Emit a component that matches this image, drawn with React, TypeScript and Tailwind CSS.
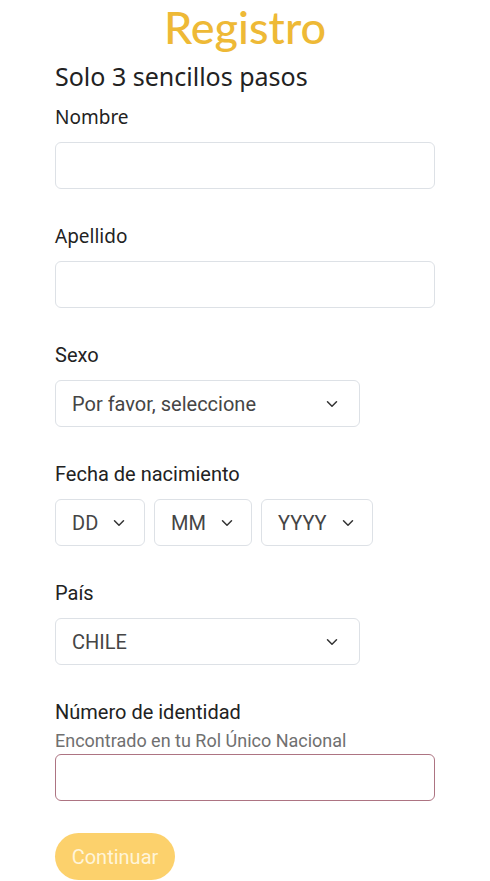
import { ChevronDown } from 'lucide-react';

const roboto = { fontFamily: 'Roboto, "Liberation Sans", sans-serif' };

function Label({ children, font }: { children: React.ReactNode; font?: 'noto' | 'roboto' }) {
  return (
    <label
      className={`block h-[26px] leading-[26px] text-[#222] ${
        font === 'noto' ? "font-['Noto_Sans',sans-serif] text-[19px]" : "font-['Roboto',sans-serif] text-[20px]"
      }`}
    >
      {children}
    </label>
  );
}

function TextInput({ invalid }: { invalid?: boolean }) {
  return (
    <input
      type="text"
      className={`block h-[47px] w-full rounded-md border bg-white px-4 outline-none ${
        invalid ? 'border-[#ad7482]' : 'border-[#dde1e6]'
      }`}
    />
  );
}

function Select({ value, width }: { value: string; width: string }) {
  return (
    <div
      className={`flex h-[47px] ${width} items-center justify-between rounded-md border border-[#dde1e6] bg-white pl-4 pr-[18px] text-[20px] text-[#454545]`}
      style={roboto}
    >
      <span>{value}</span>
      <ChevronDown className="h-[18px] w-[18px] text-[#333]" strokeWidth={2} />
    </div>
  );
}

function DateSelect({ value, width }: { value: string; width: string }) {
  return (
    <div
      className={`flex h-[47px] ${width} items-center gap-[12px] rounded-md border border-[#dde1e6] bg-white pl-4 text-[20px] text-[#454545]`}
      style={roboto}
    >
      <span>{value}</span>
      <ChevronDown className="h-[18px] w-[18px] text-[#333]" strokeWidth={2} />
    </div>
  );
}

export default function App() {
  return (
    <div className="min-h-screen bg-white px-[55px]">
      {/* Header */}
      <h1 className="h-[52px] pt-[2px] text-center font-['Lato',sans-serif] text-[45px] font-medium leading-[50px] text-[#eeb936]">
        Registro
      </h1>
      <h2 className="mt-[8px] h-[32px] font-['Noto_Sans',sans-serif] text-[25px] leading-[32px] text-[#222]">
        Solo 3 sencillos pasos
      </h2>

      <div className="mt-[12px]">
        <Label font="noto">Nombre</Label>
        <div className="mt-[12px]">
          <TextInput />
        </div>
      </div>

      <div className="mt-[34px]">
        <Label font="noto">Apellido</Label>
        <div className="mt-[12px]">
          <TextInput />
        </div>
      </div>

      <div className="mt-[34px]">
        <Label>Sexo</Label>
        <div className="mt-[12px]">
          <Select value="Por favor, seleccione" width="w-[305px]" />
        </div>
      </div>

      <div className="mt-[34px]">
        <Label>Fecha de nacimiento</Label>
        <div className="mt-[12px] flex gap-[9px]">
          <DateSelect value="DD" width="w-[90px]" />
          <DateSelect value="MM" width="w-[98px]" />
          <DateSelect value="YYYY" width="w-[112px]" />
        </div>
      </div>

      <div className="mt-[34px]">
        <Label>País</Label>
        <div className="mt-[12px]">
          <Select value="CHILE" width="w-[305px]" />
        </div>
      </div>

      <div className="mt-[34px]">
        <Label>Número de identidad</Label>
        <p className="mt-[6px] h-[20px] text-[18px] leading-[20px] text-[#707070]" style={roboto}>
          Encontrado en tu Rol Único Nacional
        </p>
        <div className="mt-[3px]">
          <TextInput invalid />
        </div>
      </div>

      <button
        type="button"
        className="mt-[32px] h-[47px] w-[120px] rounded-full bg-[#fcd16c] text-[20px] text-[#fff5da]"
        style={roboto}
      >
        Continuar
      </button>
    </div>
  );
}
